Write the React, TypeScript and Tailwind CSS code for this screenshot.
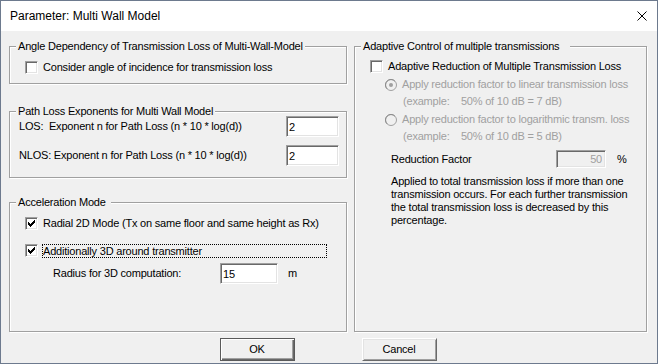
import React from "react";

const sunken =
  "border border-t-[#a0a0a0] border-l-[#a0a0a0] border-r-white border-b-white shadow-[inset_1px_1px_0_#696969,inset_-1px_-1px_0_#e3e3e3]";

const CheckBox = ({ checked }: { checked?: boolean }) => (
  <span className={`flex h-[13px] w-[13px] shrink-0 items-center justify-center bg-white ${sunken}`}>
    {checked && (
      <svg width="7" height="7" viewBox="0 0 7 7" shapeRendering="crispEdges">
        <path
          fill="#000"
          d="M6 0h1v1h-1zM5 1h2v1h-2zM0 2h1v1h-1zM4 2h3v1h-3zM0 3h2v1h-2zM3 3h3v1h-3zM0 4h5v1h-5zM1 5h3v1h-3zM2 6h1v1h-1z"
        />
      </svg>
    )}
  </span>
);

const Radio = ({ checked }: { checked?: boolean }) => (
  <svg width="12" height="12" viewBox="0 0 12 12" className="shrink-0">
    <circle cx="6" cy="6" r="5.5" fill="#f0f0f0" stroke="#a0a0a0" />
    <path d="M2.1 9.9A5.5 5.5 0 0 1 9.9 2.1" fill="none" stroke="#8c8c8c" />
    {checked && <circle cx="6" cy="6" r="2" fill="#a0a0a0" />}
  </svg>
);

const Group = ({
  title,
  className,
  children,
}: {
  title: string;
  className: string;
  children?: React.ReactNode;
}) => (
  <div className={`relative border border-[#a0a0a0] shadow-[1px_1px_0_#fff,inset_1px_1px_0_#fff] ${className}`}>
    <span className="absolute -top-[7px] left-[6px] bg-[#f0f0f0] px-[2px] leading-[13px] whitespace-pre">
      {title}
    </span>
    {children}
  </div>
);

const TextBox = ({ value, className }: { value: string; className: string }) => (
  <input
    readOnly
    value={value}
    className={`bg-white pl-[2px] text-[11px] outline-none ${sunken} ${className}`}
  />
);

export default function App() {
  return (
    <div className="flex h-[364px] w-[658px] flex-col border border-[#6d7a8e] font-['Liberation_Sans',Arial,sans-serif] text-[11px] tracking-[-0.2px] text-black">
      <div className="flex h-[30px] shrink-0 items-center justify-between bg-white pl-[9px] pr-[10px]">
        <span className="text-[12px] tracking-normal">Parameter: Multi Wall Model</span>
        <svg width="10" height="10" viewBox="0 0 10 10">
          <path d="M0.5 0.5L9.5 9.5M9.5 0.5L0.5 9.5" stroke="#000" strokeWidth="1" />
        </svg>
      </div>

      <div className="flex flex-1 flex-col bg-[#f0f0f0] pl-[8px] pr-[10px] pt-[15px]">
        <div className="flex gap-[7px]">
          <div className="flex w-[338px] flex-col">
            <Group title="Angle Dependency of Transmission Loss of Multi-Wall-Model" className="h-[38px] pl-[15px] pt-[14px]">
              <div className="flex h-[13px] items-center gap-[5px]">
                <CheckBox />
                <span>Consider angle of incidence for transmission loss</span>
              </div>
            </Group>

            <Group title="Path Loss Exponents for Multi Wall Model" className="mt-[27px] h-[67px] pl-[9px] pr-[7px] pt-[4px]">
              <div className="flex h-[21px] items-center justify-between">
                <span className="whitespace-pre">LOS:  Exponent n for Path Loss (n * 10 * log(d))</span>
                <TextBox value="2" className="h-[21px] w-[53px]" />
              </div>
              <div className="mt-[8px] flex h-[21px] items-center justify-between">
                <span>NLOS: Exponent n for Path Loss (n * 10 * log(d))</span>
                <TextBox value="2" className="h-[21px] w-[53px]" />
              </div>
            </Group>

            <Group title="Acceleration Mode " className="mt-[24px] h-[130px] pl-[15px] pt-[14px]">
              <div className="flex h-[13px] items-center gap-[5px]">
                <CheckBox checked />
                <span>Radial 2D Mode (Tx on same floor and same height as Rx)</span>
              </div>
              <div className="mt-[14px] flex h-[13px] items-center gap-[4px]">
                <CheckBox checked />
                <span className="h-[14px] w-[285px] border border-dotted border-black leading-[12px]">
                  Additionally 3D around transmitter
                </span>
              </div>
              <div className="mt-[6px] flex h-[21px] items-center pl-[28px]">
                <span className="w-[167px]">Radius for 3D computation:</span>
                <TextBox value="15" className="h-[21px] w-[58px]" />
                <span className="ml-[10px]">m</span>
              </div>
            </Group>
          </div>

          <Group title="Adaptive Control of multiple transmissions   " className="h-[286px] w-[293px] pl-[15px] pt-[13px]">
            <div className="flex h-[13px] items-center gap-[5px]">
              <CheckBox />
              <span>Adaptive Reduction of Multiple Transmission Loss</span>
            </div>
            <div className="pl-[15px] text-[#a0a0a0]">
              <div className="mt-[5px] flex h-[13px] items-center gap-[5px]">
                <Radio checked />
                <span>Apply reduction factor to linear transmission loss</span>
              </div>
              <div className="mt-[4px] h-[13px] whitespace-pre pl-[18px] leading-[13px]">
                (example:    50% of 10 dB = 7 dB)
              </div>
              <div className="mt-[5px] flex h-[13px] items-center gap-[5px]">
                <Radio />
                <span>Apply reduction factor to logarithmic transm. loss</span>
              </div>
              <div className="mt-[4px] h-[13px] whitespace-pre pl-[18px] leading-[13px]">
                (example:    50% of 10 dB = 5 dB)
              </div>
            </div>
            <div className="mt-[7px] flex h-[18px] items-center pl-[21px]">
              <span className="w-[165px]">Reduction Factor</span>
              <input
                readOnly
                value="50"
                className={`h-[18px] w-[50px] bg-[#f0f0f0] pr-[3px] text-right text-[11px] text-[#a0a0a0] outline-none ${sunken}`}
              />
              <span className="ml-[11px]">%</span>
            </div>
            <p className="mt-[7px] pl-[21px] leading-[13px]">
              Applied to total transmission loss if more than one
              <br />
              transmission occurs. For each further transmission
              <br />
              the total transmission loss is decreased by this
              <br />
              percentage.
            </p>
          </Group>
        </div>

        <div className="mt-[6px] flex justify-center gap-[67px]">
          <button className="h-[23px] w-[75px] border border-[#5a5a5a] bg-[#f0f0f0] shadow-[inset_1px_1px_0_#fff,inset_-1px_-1px_0_#696969,inset_-2px_-2px_0_#a0a0a0]">
            OK
          </button>
          <button className="h-[23px] w-[75px] border border-t-white border-l-white border-r-[#696969] border-b-[#696969] bg-[#f0f0f0] shadow-[inset_1px_1px_0_#e3e3e3,inset_-1px_-1px_0_#a0a0a0]">
            Cancel
          </button>
        </div>
      </div>
    </div>
  );
}
